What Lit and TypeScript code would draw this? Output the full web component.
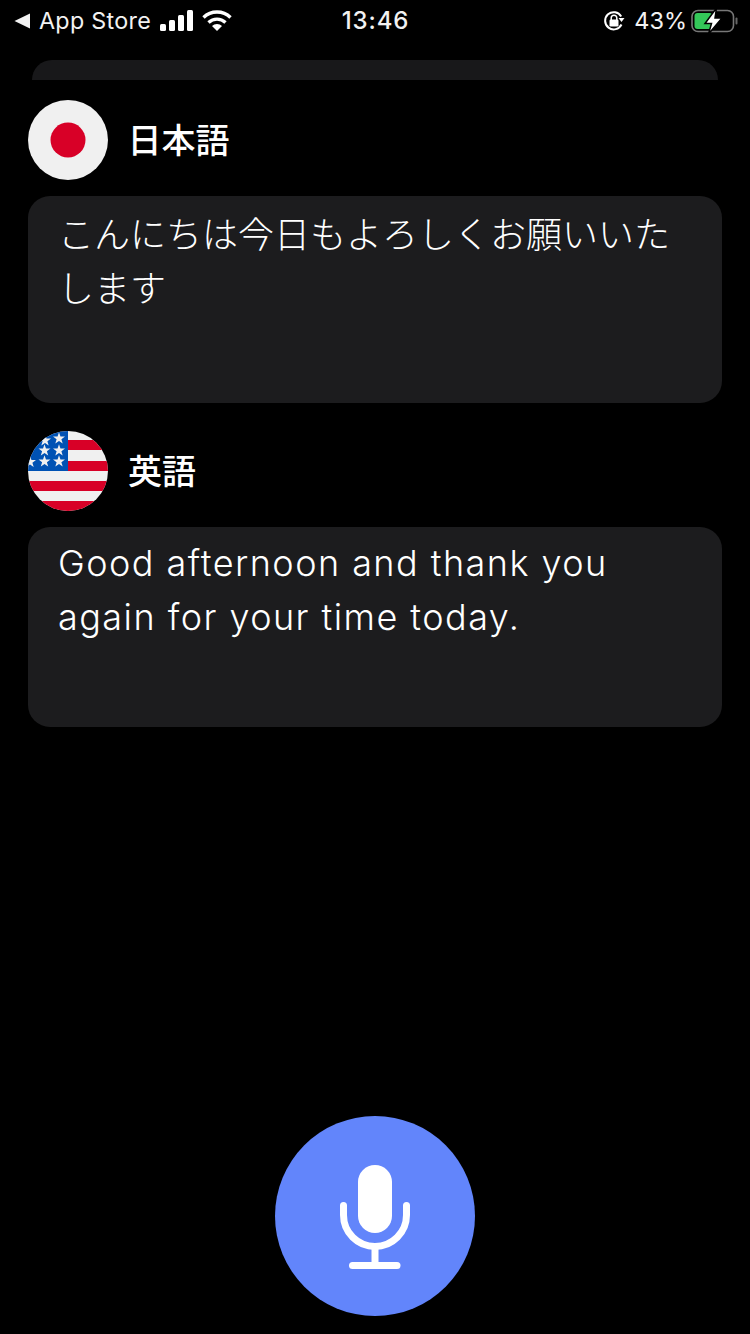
import { LitElement, html, css, svg } from "lit";
import { customElement } from "lit/decorators.js";

const star = (x: number, y: number) => {
  const pts: string[] = [];
  const r = 6.3;
  for (let i = 0; i < 10; i++) {
    const rad = i % 2 ? r * 0.4 : r;
    const a = -Math.PI / 2 + (i * Math.PI) / 5;
    pts.push(`${(x + rad * Math.cos(a)).toFixed(2)},${(y + rad * Math.sin(a)).toFixed(2)}`);
  }
  return svg`<polygon points=${pts.join(" ")} fill="#f0f0f0"></polygon>`;
};

@customElement("app-root")
export class AppRoot extends LitElement {
  static styles = css`
    :host {
      display: block;
      width: 750px;
      height: 1334px;
      background: #000;
      color: #fff;
      font-family: "Inter", "Noto Sans CJK JP", sans-serif;
      overflow: hidden;
    }
    .page {
      height: 1334px;
      display: flex;
      flex-direction: column;
      box-sizing: border-box;
    }
    .status {
      height: 40px;
      display: grid;
      grid-template-columns: 1fr auto 1fr;
      align-items: center;
      padding: 1px 12px 0 14px;
      box-sizing: border-box;
      font-size: 24px;
      font-family: "Inter", "Liberation Sans", sans-serif;
      color: #f2f2f2;
    }
    .left, .right { display: flex; align-items: center; }
    .left { gap: 6px; }
    .left .label { margin: 0 3px 0 1px; letter-spacing: 0.3px; font-size: 23.3px; }
    .wifi { margin-left: 2px; }
    .right { justify-content: flex-end; }
    .time { font-weight: 500; letter-spacing: 0.9px; font-size: 24px; margin-left: -1px; }
    .pct { margin: 0 4px 0 9px; font-size: 23.5px; }
    svg { display: block; }
    .battery { overflow: visible; }
    .stub {
      margin: 20px 32px 20px;
      height: 20px;
      background: #18181a;
      border-radius: 20px 20px 0 0;
      flex: none;
    }
    .lang {
      display: flex;
      align-items: center;
      gap: 19.5px;
      padding: 0 28px;
      height: 80px;
      flex: none;
      font-family: "Noto Sans CJK JP", sans-serif;
      font-size: 34px;
      font-weight: 500;
    }
    .lang span { margin-top: -3px; }
    .en-lang { gap: 20px; }
    .card {
      margin: 16px 28px 28px;
      padding: 9px 30px 0 30px;
      background: #1c1c1e;
      border-radius: 22px;
      box-sizing: border-box;
      font-size: 36px;
      line-height: 54px;
      flex: none;
    }
    .jp {
      height: 207px;
      font-family: "Noto Sans CJK JP", sans-serif;
      font-weight: 300;
    }
    .en {
      height: 200px;
      margin-bottom: 0;
      padding: 9px 60px 0 30px;
      font-family: "Inter", sans-serif;
      font-weight: 300;
      font-size: 36px;
      letter-spacing: 1.45px;
    }
    .mic {
      width: 200px;
      height: 200px;
      border-radius: 50%;
      background: #6285fb;
      margin: auto auto 18px;
      display: flex;
      align-items: center;
      justify-content: center;
      flex: none;
    }
    .mic svg { margin-top: 2px; }
  `;

  render() {
    return html`<div class="page">
      <div class="status">
        <div class="left">
          <svg width="18" height="16" viewBox="0 0 18 16"><path d="M0.5 8 L16 0.5 V15.500 Z" fill="#f2f2f2"></path></svg>
          <span class="label">App Store</span>
          <svg width="34" height="22" viewBox="0 0 34 22">
            <rect x="0" y="14" width="6" height="7" rx="1.5" fill="#fff"></rect>
            <rect x="9" y="10" width="6" height="11" rx="1.5" fill="#fff"></rect>
            <rect x="18" y="5" width="6" height="16" rx="1.5" fill="#fff"></rect>
            <rect x="27" y="0" width="6" height="21" rx="1.5" fill="#fff"></rect>
          </svg>
          <svg class="wifi" width="30" height="22" viewBox="0 0 30 22">
            <path d="M1.5 7.500 A19.500 19.500 0 0 1 28.500 7.500" fill="none" stroke="#fff" stroke-width="3.4"></path>
            <path d="M6.5 12.500 A12.500 12.500 0 0 1 23.500 12.500" fill="none" stroke="#fff" stroke-width="3.4"></path>
            <path d="M10 16 L15 21 L20 16 A7 7 0 0 0 10 16 Z" fill="#fff"></path>
          </svg>
        </div>
        <div class="time">13:46</div>
        <div class="right">
          <svg width="22" height="22" viewBox="0 0 22 22">
            <path d="M18.500 14.500 A8.600 8.600 0 1 1 18.200 6.500" fill="none" stroke="#fff" stroke-width="2"></path>
            <path d="M15.500 8 L21.500 8 L18.500 12 Z" fill="#fff"></path>
            <rect x="6.5" y="9.5" width="9" height="7" rx="1.2" fill="#fff"></rect>
            <path d="M8.200 10 V8 A2.800 2.800 0 0 1 13.800 8 V10" fill="none" stroke="#fff" stroke-width="1.5"></path>
          </svg>
          <span class="pct">43%</span>
          <svg class="battery" width="47" height="24" viewBox="0 0 47 24">
            <rect x="1" y="1.5" width="41.500" height="21" rx="6" fill="none" stroke="#777" stroke-width="1.600"></rect>
            <rect x="44.500" y="8.500" width="2" height="7" rx="1" fill="#666"></rect>
            <rect x="3.500" y="4" width="18" height="16" rx="3" fill="#34c759"></rect>
            <path d="M25.500 -1 L14 14.500 H20.500 L17.500 25 L31 9 H24 Z" fill="#fff" stroke="#000" stroke-width="1.500"></path>
          </svg>
        </div>
      </div>
      <div class="stub"></div>
      <div class="lang">
        <svg width="80" height="80" viewBox="0 0 80 80">
          <circle cx="40" cy="40" r="40" fill="#f0f0f0"></circle>
          <circle cx="40" cy="40" r="17.500" fill="#d80027"></circle>
        </svg>
        <span>日本語</span>
      </div>
      <div class="card jp">こんにちは今日もよろしくお願いいたします</div>
      <div class="lang en-lang">
        <svg width="80" height="80" viewBox="0 0 80 80">
          <defs><clipPath id="c"><circle cx="40" cy="40" r="40"></circle></clipPath></defs>
          <g clip-path="url(#c)">
            <rect width="80" height="80" fill="#f0f0f0"></rect>
            <rect x="40" y="9" width="40" height="10" fill="#d80027"></rect>
            <rect x="40" y="30" width="40" height="10" fill="#d80027"></rect>
            <rect y="50" width="80" height="10" fill="#d80027"></rect>
            <rect y="70" width="80" height="10" fill="#d80027"></rect>
            <rect width="40" height="40" fill="#0052b4"></rect>
            ${star(31, 7.5)} ${star(17, 9.5)} ${star(31, 19.5)} ${star(16.5, 19.5)} ${star(31, 30.5)} ${star(16.5, 30.5)} ${star(2, 31)}
          </g>
        </svg>
        <span>英語</span>
      </div>
      <div class="card en">Good afternoon and thank you again for your time today.</div>
      <div class="mic">
        <svg width="72" height="104" viewBox="0 0 72 104">
          <rect x="19" y="0" width="34" height="68" rx="17" fill="#fff"></rect>
          <path d="M4.500 40.500 V50 A31.500 31.500 0 0 0 67.500 50 V40.500" fill="none" stroke="#fff" stroke-width="7" stroke-linecap="round"></path>
          <path d="M36 81 V100" stroke="#fff" stroke-width="7"></path>
          <path d="M13.500 100.500 H58" stroke="#fff" stroke-width="7" stroke-linecap="round"></path>
        </svg>
      </div>
    </div>`;
  }
}
